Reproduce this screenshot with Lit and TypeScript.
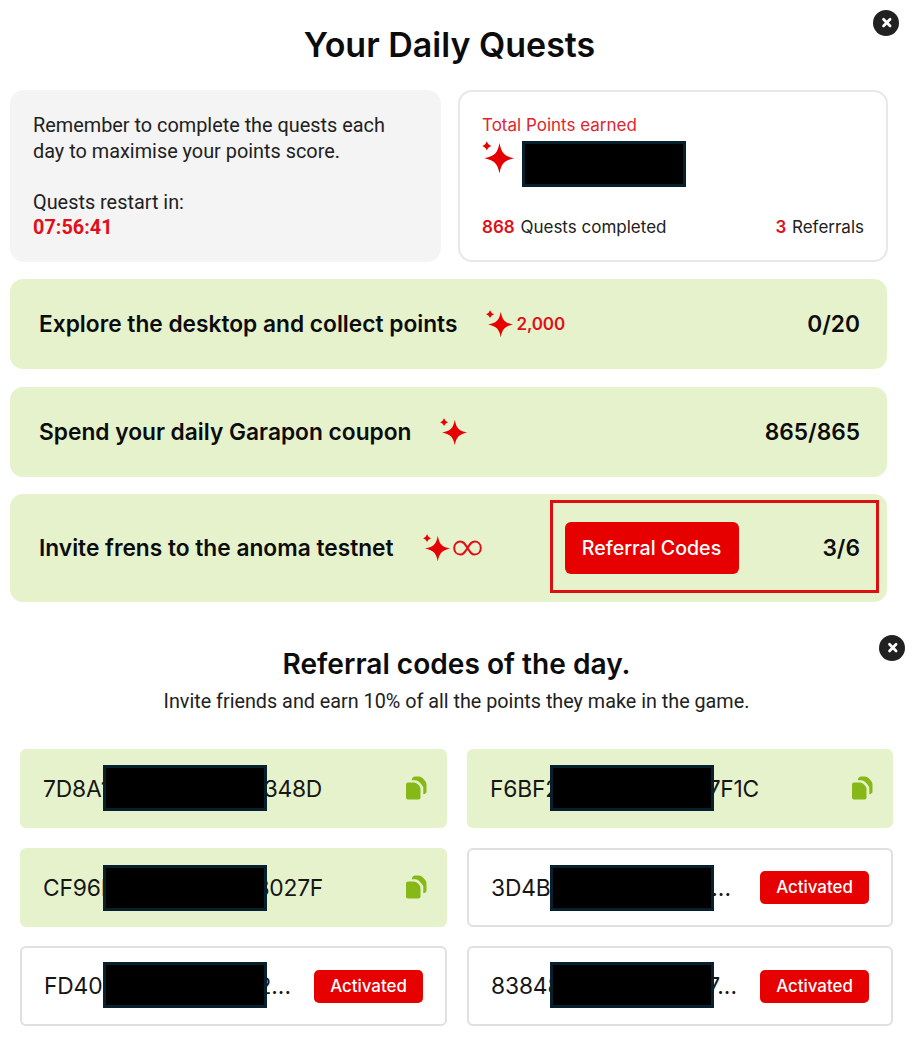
import { LitElement, html, css, svg } from "lit";
import { customElement } from "lit/decorators.js";

interface Code { head: string; tail: string; end: number; active: boolean; }

const sparkle = (cls: string) => html`<svg class=${cls} viewBox="0 0 32 32" fill="#e60000">
  ${svg`<path d="M17.500 2C19.300 11.500 22 15.200 32 17.200C22 19.500 19.300 23 17.500 32.500C15.700 23 13 19.500 2.500 17.200C13 15.200 15.700 11.500 17.500 2Z"/><path d="M4.800 0.300Q5.800 3.800 9.500 4.900Q5.800 6 4.800 9.500Q3.800 6 0.200 4.900Q3.800 3.800 4.800 0.300Z"/>`}
</svg>`;

const closeIcon = html`<svg viewBox="0 0 26 26"><circle cx="13" cy="13" r="13" fill="#212121"/><path d="M10.500 9.200L17.100 16M17.100 9.200L10.500 16" stroke="#fff" stroke-width="2.700" stroke-linecap="round"/></svg>`;

const copyIcon = html`<svg class="copy" viewBox="0 0 21 24" fill="#86b817"><path d="M2 6.500H8Q10 6.500 11.500 8L13 9.500Q14.500 11 14.500 13V21.500Q14.500 23.500 12.500 23.500H2Q0 23.500 0 21.500V8.500Q0 6.500 2 6.500Z"/><path d="M5.700 4.300Q6.500 0.600 9 0.600H13Q15 0.600 16.500 2.100L19 4.800Q20.500 6.500 20.500 8.500V15.500Q20.500 17.800 17.300 18.300V12.500Q17.300 10.500 15.500 8.500L13.200 6Q11.500 4.300 9.500 4.300Z"/></svg>`;

@customElement("app-root")
export class AppRoot extends LitElement {
  static styles = css`
    :host { display: block; width: 919px; height: 1039px; overflow: hidden; background: #fff; color: #0c0c0c; font-family: Inter, sans-serif; }
    * { box-sizing: border-box; }
    h1, h2, p { margin: 0; white-space: nowrap; }
    section { position: relative; }
    .quests { height: 625px; padding: 22px 32px 0 10px; }
    .close { position: absolute; width: 26px; height: 26px; padding: 0; border: 0; background: none; }
    .close svg { display: block; width: 26px; height: 26px; }
    .close.one { left: 873px; top: 10px; }
    .close.two { left: 878.500px; top: 0; }
    h1 { font-size: 34px; line-height: 46px; font-weight: 600; text-align: center; margin-left: 2px; }
    .summary { display: grid; grid-template-columns: 431px 430px; gap: 17px; margin-top: 22px; }
    .panel { height: 172px; border-radius: 14px; }
    .note { background: #f4f4f4; padding: 23px 23px; font: 400 19.870px/26px Roboto, sans-serif; color: #212121; }
    .note .gap { margin-top: 26px; line-height: 24px; }
    .note .time { color: #e01018; font-weight: 700; line-height: 25px; }
    .totals { border: 2px solid #e8e8e8; padding: 20px 22px 0 22px; font-size: 17px; line-height: 26px; color: #212121; }
    .label { color: #e0252c; }
    .score { display: flex; height: 46px; margin-top: 3px; }
    .spark-big { width: 32px; height: 32px; margin: 0 8px 0 0; }
    .redacted { flex: none; width: 164px; height: 46px; border: 3px solid #06212d; background: #000; position: relative; }
    .stats { display: flex; justify-content: space-between; margin-top: 27px; }
    .stats b { color: #e01018; font-weight: 600; margin-right: 1px; }
    .quest { display: flex; align-items: center; height: 90px; margin-top: 18px; padding: 0 27px 0 29px; border-radius: 13px; background: #e6f2cc; font-size: 22.720px; font-weight: 600; line-height: 30px; white-space: nowrap; }
    .summary + .quest { margin-top: 17px; }
    .quest.tall { height: 108px; margin-top: 17px; position: relative; }
    .spark { width: 27px; height: 27px; margin-left: 29px; margin-top: -2px; }
    .reward { color: #e01018; font-size: 17px; font-weight: 600; margin-left: 3px; margin-top: -1px; letter-spacing: -0.100px; }
    .infinity { width: 29px; height: 16px; margin-left: 3px; }
    .count { margin-left: auto; }
    .open { width: 174px; height: 52px; margin-left: 83px; padding: 0; border: 0; border-radius: 6px; background: #e60000; color: #fff; font: 500 19.600px/52px Inter, sans-serif; }
    .frame { position: absolute; left: 540px; top: 6px; width: 329px; height: 93px; border: 3px solid #dc1010; }
    .codes { height: 400px; padding: 0 26px 0 20px; margin-top: 10px; }
    h2 { font-size: 28.100px; line-height: 36px; font-weight: 600; text-align: center; padding-top: 11px; }
    .sub { font: 400 19.770px/26px Roboto, sans-serif; text-align: center; color: #212121; margin-top: 7px; }
    .grid { display: grid; grid-template-columns: 427px 426px; gap: 20px 20px; margin-top: 34px; }
    .code { display: flex; align-items: center; height: 79px; border-radius: 6px; padding: 0 20px 0 23px; background: #e6f2cc; font-size: 22.800px; line-height: 30px; color: #161616; }
    .code:nth-child(n + 5) { margin-top: -1px; height: 80px; }
    .code.used { background: #fff; border: 2px solid #e0e0e0; padding: 0 22px; }
    .code .redacted { top: -1px; }
    .code:nth-child(n + 3) .redacted { top: 0.500px; }
    .code:nth-child(n + 5) .redacted { top: -1px; }
    .head { flex: none; width: 60px; white-space: nowrap; letter-spacing: -0.150px; }
    .used .head { width: 59px; }
    .tail { flex: none; display: flex; justify-content: flex-end; white-space: nowrap; letter-spacing: -0.250px; }
    .used .tail { letter-spacing: 0; }
    .copy { width: 21px; height: 24px; margin-left: auto; margin-top: -1px; }
    .badge { margin-left: auto; width: 109px; height: 33px; border-radius: 5px; background: #e60000; color: #fff; text-align: center; font: 500 16.900px/33px Inter, sans-serif; }
  `;

  private codes: Code[] = [
    { head: "7D8A1", tail: "348D", end: 55, active: false },
    { head: "F6BF2", tail: "7F1C", end: 45, active: false },
    { head: "CF96B", tail: "8027F", end: 56, active: false },
    { head: "3D4B", tail: "...", end: 17, active: true },
    { head: "FD40", tail: "2...", end: 24, active: true },
    { head: "83848", tail: "7...", end: 23, active: true },
  ];

  render() {
    return html`
      <section class="quests">
        <h1>Your Daily Quests</h1>
        <button class="close one" aria-label="Close">${closeIcon}</button>
        <div class="summary">
          <div class="panel note">
            <p>Remember to complete the quests each</p>
            <p>day to maximise your points score.</p>
            <p class="gap">Quests restart in:</p>
            <p class="time">07:56:41</p>
          </div>
          <div class="panel totals">
            <p class="label">Total Points earned</p>
            <div class="score">${sparkle("spark-big")}<div class="redacted"></div></div>
            <div class="stats"><p><b>868</b> Quests completed</p><p><b>3</b> Referrals</p></div>
          </div>
        </div>
        <div class="quest"><span>Explore the desktop and collect points</span>${sparkle("spark")}<span class="reward">2,000</span><span class="count">0/20</span></div>
        <div class="quest"><span>Spend your daily Garapon coupon</span>${sparkle("spark")}<span class="count">865/865</span></div>
        <div class="quest tall"><span>Invite frens to the anoma testnet</span>${sparkle("spark")}
          <svg class="infinity" viewBox="0 0 29 16" fill="none" stroke="#e01018" stroke-width="2"><path d="M14.500 8C11.800 3.500 10.300 1.500 7.300 1.500C3.800 1.500 1.200 4.200 1.200 8S3.800 14.500 7.300 14.500C10.300 14.500 11.800 12.500 14.500 8C17.200 3.500 18.700 1.500 21.700 1.500C25.200 1.500 27.800 4.200 27.800 8S25.200 14.500 21.700 14.500C18.700 14.500 17.200 12.500 14.500 8Z"/></svg>
          <button class="open">Referral Codes</button><span class="count">3/6</span>
          <div class="frame"></div>
        </div>
      </section>
      <section class="codes">
        <button class="close two" aria-label="Close">${closeIcon}</button>
        <h2>Referral codes of the day.</h2>
        <p class="sub">Invite friends and earn 10% of all the points they make in the game.</p>
        <div class="grid">
          ${this.codes.map((c) => html`<div class="code ${c.active ? "used" : ""}">
            <span class="head">${c.head}</span><div class="redacted"></div><span class="tail" style="width:${c.end}px">${c.tail}</span>
            ${c.active ? html`<span class="badge">Activated</span>` : copyIcon}
          </div>`)}
        </div>
      </section>`;
  }
}
